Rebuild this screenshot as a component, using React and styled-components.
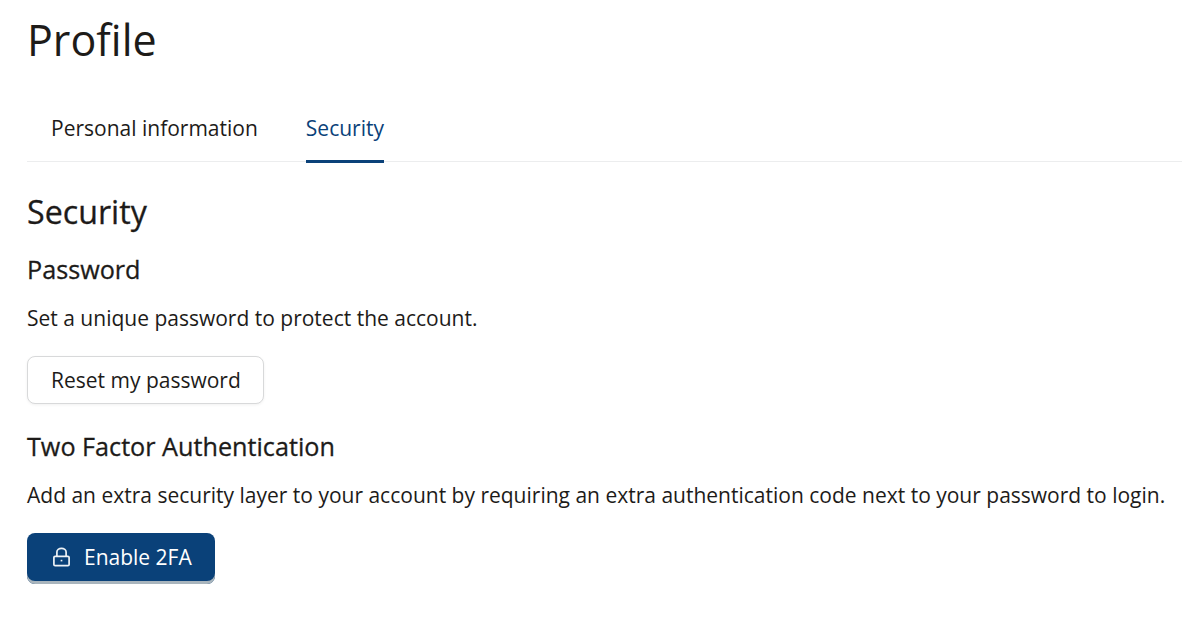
import React from 'react'
import styled, { createGlobalStyle } from 'styled-components'

const GlobalStyle = createGlobalStyle`
	html, body {
		margin: 0;
		padding: 0;
		background: #fff;
		color: #1d1b19;
		font-family: 'Open Sans', sans-serif;
	}
`

export default function App() {
	return (
		<Page>
			<GlobalStyle />
			<PageTitle>Profile</PageTitle>
			<Tabs>
				<Tab>Personal information</Tab>
				<Tab active>Security</Tab>
			</Tabs>
			<SectionTitle>Security</SectionTitle>
			<SubTitle>Password</SubTitle>
			<Text>Set a unique password to protect the account.</Text>
			<SecondaryButton>Reset my password</SecondaryButton>
			<SubTitle second>Two Factor Authentication</SubTitle>
			<Text>Add an extra security layer to your account by requiring an extra authentication code next to your password to login.</Text>
			<PrimaryButton>
				<LockIcon />
				Enable 2FA
			</PrimaryButton>
		</Page>
	)
}

function LockIcon() {
	return (
		<svg width="20" height="20" viewBox="0 0 20 20" fill="none" stroke="#eef2f6" strokeWidth="1.7">
			<rect x="2.9" y="9.3" width="15.2" height="9.4" rx="1.2" />
			<path d="M5.9 9.3V5a4.6 3.6 0 0 1 9.2 0v4.3" />
			<path d="M10.5 12.8v1.6" />
		</svg>
	)
}

const Page = styled.div`
	width: 1182px;
	height: 630px;
	padding-left: 27px;
	box-sizing: border-box;
	overflow: hidden;
`

const PageTitle = styled.h1`
	margin: 0;
	padding-top: 11px;
	font-size: 43px;
	line-height: 58px;
	font-weight: 400;
`

const Tabs = styled.div`
	display: flex;
	gap: 48px;
	margin-top: 22px;
	padding-left: 24px;
	height: 71px;
	box-sizing: border-box;
	border-bottom: 1px solid #ecedee;
`

const Tab = styled.div`
	height: 72px;
	box-sizing: border-box;
	padding-top: 21px;
	font-size: 21px;
	line-height: 32px;
	color: ${props => (props.active ? '#0a4179' : '#1d1b19')};
	border-bottom: ${props => (props.active ? '3px solid #0a4179' : 'none')};
`

const SectionTitle = styled.h2`
	margin: 28px 0 0;
	font-size: 32.2px;
	line-height: 44px;
	font-weight: 400;
	-webkit-text-stroke: 0.3px #1d1b19;
`

const SubTitle = styled.h3`
	margin: ${props => (props.second ? '27px' : '20px')} 0 0;
	font-size: 25.2px;
	line-height: 30px;
	font-weight: 400;
	-webkit-text-stroke: 0.3px #1d1b19;
`

const Text = styled.p`
	margin: 18px 0 0;
	font-size: 21px;
	line-height: 32px;
`

const SecondaryButton = styled.button`
	display: block;
	margin-top: 22px;
	height: 48px;
	padding: 0 22px 0 23px;
	background: #fff;
	border: 1px solid #d8d9da;
	border-radius: 8px;
	box-shadow: 0 1px 3px rgba(0, 0, 0, 0.06);
	font-family: inherit;
	font-size: 21px;
	color: #1d1b19;
`

const PrimaryButton = styled.button`
	display: flex;
	align-items: center;
	gap: 13px;
	margin-top: 22px;
	height: 51px;
	padding: 0 23px 4px 24px;
	background: #0a4179;
	border: none;
	border-radius: 8px;
	box-shadow: inset 0 -3px 0 #a9b5bd;
	font-family: inherit;
	font-size: 21px;
	color: #fff;
`
